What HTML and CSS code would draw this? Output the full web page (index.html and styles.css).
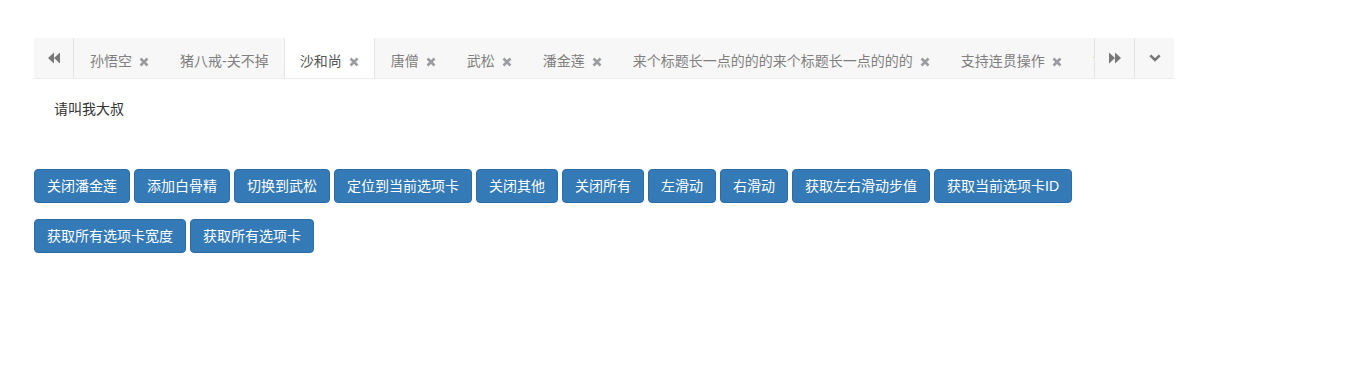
FILE: index.html
```html
<!DOCTYPE html>
<html lang="zh-CN">
<head>
  <meta charset="UTF-8" />
  <title>Tabs Demo</title>
  <link rel="stylesheet" href="styles.css">
</head>
<body>

  <div class="tabs">
    <button class="tab-nav nav-left" title="左滑动">
      <svg width="12" height="12" viewBox="0 0 12 12"><path d="M0 6L6 0.5v11z M6 6l6-5.5v11z" fill="currentColor"/></svg>
    </button>

    <div class="tab-scroll">
      <ul class="tab-list">
        <li class="tab">孙悟空<span class="close"><svg width="10" height="10" viewBox="0 0 10 10"><path d="M1.5 1.5l7 7M8.5 1.5l-7 7" stroke="currentColor" stroke-width="2.6"/></svg></span></li>
        <li class="tab">猪八戒-关不掉</li>
        <li class="tab active">沙和尚<span class="close"><svg width="10" height="10" viewBox="0 0 10 10"><path d="M1.5 1.5l7 7M8.5 1.5l-7 7" stroke="currentColor" stroke-width="2.6"/></svg></span></li>
        <li class="tab">唐僧<span class="close"><svg width="10" height="10" viewBox="0 0 10 10"><path d="M1.5 1.5l7 7M8.5 1.5l-7 7" stroke="currentColor" stroke-width="2.6"/></svg></span></li>
        <li class="tab">武松<span class="close"><svg width="10" height="10" viewBox="0 0 10 10"><path d="M1.5 1.5l7 7M8.5 1.5l-7 7" stroke="currentColor" stroke-width="2.6"/></svg></span></li>
        <li class="tab">潘金莲<span class="close"><svg width="10" height="10" viewBox="0 0 10 10"><path d="M1.5 1.5l7 7M8.5 1.5l-7 7" stroke="currentColor" stroke-width="2.6"/></svg></span></li>
        <li class="tab">来个标题长一点的的的来个标题长一点的的的<span class="close"><svg width="10" height="10" viewBox="0 0 10 10"><path d="M1.5 1.5l7 7M8.5 1.5l-7 7" stroke="currentColor" stroke-width="2.6"/></svg></span></li>
        <li class="tab">支持连贯操作<span class="close"><svg width="10" height="10" viewBox="0 0 10 10"><path d="M1.5 1.5l7 7M8.5 1.5l-7 7" stroke="currentColor" stroke-width="2.6"/></svg></span></li>
        <li class="tab">第九个选项卡<span class="close"><svg width="10" height="10" viewBox="0 0 10 10"><path d="M1.5 1.5l7 7M8.5 1.5l-7 7" stroke="currentColor" stroke-width="2.6"/></svg></span></li>
      </ul>
    </div>

    <button class="tab-nav nav-right" title="右滑动">
      <svg width="12" height="12" viewBox="0 0 12 12"><path d="M0 0.5L6 6 0 11.5z M6 0.5l6 5.5-6 5.5z" fill="currentColor"/></svg>
    </button>
    <button class="tab-nav nav-menu" title="更多">
      <svg width="12" height="8" viewBox="0 0 12 8"><path d="M1.3 1.3l4.7 4.7 4.7-4.7" fill="none" stroke="currentColor" stroke-width="2.6"/></svg>
    </button>
  </div>

  <div class="tab-content">请叫我大叔</div>

  <div class="actions">
    <button class="btn">关闭潘金莲</button>
    <button class="btn">添加白骨精</button>
    <button class="btn">切换到武松</button>
    <button class="btn">定位到当前选项卡</button>
    <button class="btn">关闭其他</button>
    <button class="btn">关闭所有</button>
    <button class="btn">左滑动</button>
    <button class="btn">右滑动</button>
    <button class="btn">获取左右滑动步值</button>
    <button class="btn">获取当前选项卡ID</button>
  </div>

  <div class="actions">
    <button class="btn">获取所有选项卡宽度</button>
    <button class="btn">获取所有选项卡</button>
  </div>

</body>
</html>
```

FILE: styles.css
```css
body {
  margin: 0;
  padding: 38px 34px;
  font-family: "Liberation Sans", "Noto Sans CJK SC", sans-serif;
  font-size: 14px;
  color: #333;
  background: #fff;
}

/* tab bar */
.tabs {
  display: flex;
  width: 1140px;
  height: 41px;
  background: #f7f7f7;
  border-bottom: 1px solid #ececec;
  box-sizing: border-box;
}

.tab-nav {
  flex: none;
  width: 40px;
  height: 40px;
  padding: 0;
  border: none;
  background: #f7f7f7;
  color: #777;
  display: flex;
  align-items: center;
  justify-content: center;
  cursor: pointer;
}

.nav-left {
  border-right: 1px solid #e4e4e4;
}

.nav-right,
.nav-menu {
  border-left: 1px solid #e4e4e4;
}

.tab-scroll {
  flex: 1;
  overflow: hidden;
}

.tab-list {
  list-style: none;
  margin: 0;
  padding: 0;
  display: flex;
  white-space: nowrap;
}

.tab {
  flex: none;
  height: 41px;
  box-sizing: border-box;
  padding: 5px 15px 0;
  line-height: 36px;
  color: #808080;
  border-left: 1px solid transparent;
  cursor: pointer;
}

.tab.active {
  background: #fff;
  color: #555;
  border-left-color: #e4e4e4;
  border-right: 1px solid #e4e4e4;
}

.close {
  display: inline-block;
  margin-left: 7px;
  color: #9a9ca2;
  vertical-align: -1px;
}

.close svg {
  display: block;
}

/* content */
.tab-content {
  padding: 20px;
  line-height: 20px;
  margin-bottom: 30px;
}

/* buttons */
.actions {
  display: flex;
  gap: 4px;
  margin-bottom: 16px;
}

.btn {
  padding: 6px 12px;
  font-family: inherit;
  font-size: 14px;
  line-height: 20px;
  color: #fff;
  background-color: #337ab7;
  border: 1px solid #2e6da4;
  border-radius: 4px;
  cursor: pointer;
}

.btn:hover {
  background-color: #286090;
}
```
